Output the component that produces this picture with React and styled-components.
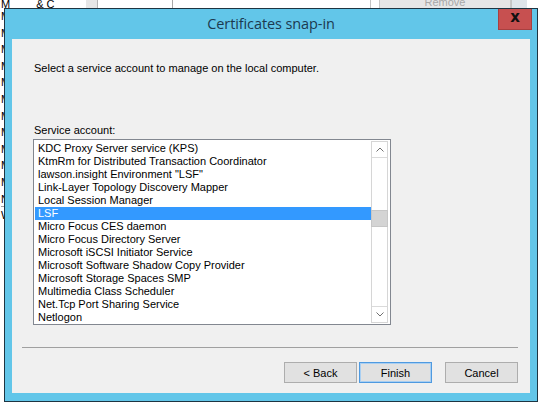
import React from 'react';
import styled, { createGlobalStyle } from 'styled-components';

const accounts = [
  'KDC Proxy Server service (KPS)',
  'KtmRm for Distributed Transaction Coordinator',
  'lawson.insight Environment "LSF"',
  'Link-Layer Topology Discovery Mapper',
  'Local Session Manager',
  'LSF',
  'Micro Focus CES daemon',
  'Micro Focus Directory Server',
  'Microsoft iSCSI Initiator Service',
  'Microsoft Software Shadow Copy Provider',
  'Microsoft Storage Spaces SMP',
  'Multimedia Class Scheduler',
  'Net.Tcp Port Sharing Service',
  'Netlogon',
];

const SELECTED = 'LSF';

// only the first letter of each row peeks out from under the dialog
const backRows = ['M', 'M', 'M', 'M', 'M', 'M', 'M', 'M', 'M', 'M', 'M', 'N', 'W'];

const GlobalStyle = createGlobalStyle`
  html, body {
    margin: 0;
    padding: 0;
    background: #fff;
  }
  * {
    box-sizing: border-box;
  }
`;

const Desktop = styled.div`
  position: relative;
  width: 545px;
  height: 413px;
  overflow: hidden;
  background: #fff;
  font-family: "Liberation Sans", Arial, sans-serif;
  font-size: 11px;
  color: #000;
`;

/* window lying behind the dialog */
const BackWindow = styled.div`
  display: flex;
  height: 400px;
`;

const BackList = styled.div`
  width: 86px;
  padding: 0 0 0 1px;
  display: flex;
  flex-direction: column;
`;

const BackHead = styled.div`
  height: 8px;
  line-height: 8px;
  display: flex;
  gap: 26px;
  overflow: hidden;
  align-items: flex-end;
`;

const BackRow = styled.div`
  height: 16.6px;
  line-height: 16.6px;
  white-space: nowrap;
  border-bottom: ${(p) => (p.$ruled ? '1px solid #a0a0a0' : 'none')};
`;

const BackScroll = styled.div`
  width: 12px;
  background: #e6e6e6;
  border-right: 1px solid #b4b4b4;
`;

const BackPanel = styled.div`
  width: 75px;
  border-right: 1px solid #a8a8a8;
`;

const BackGap = styled.div`
  flex: 1;
  border-right: 1px solid #c4c4c4;
`;

const BackButtons = styled.div`
  width: 140px;
  padding-left: 8px;
`;

const RemoveButton = styled.div`
  margin-top: -7px;
  height: 18px;
  background: #e6e6e6;
  border: 1px solid #c8c8c8;
  color: #a8a8a8;
  display: flex;
  align-items: center;
  justify-content: center;
`;

const BackScroll2 = styled.div`
  width: 16px;
  background: #dfe5ea;
  border-left: 1px solid #c4c4c4;
`;

const BackEdge = styled.div`
  width: 18px;
  background: #fff;
`;

/* the dialog */
const Dialog = styled.section`
  position: absolute;
  left: 4px;
  top: 8px;
  width: 534px;
  height: 394px;
  border: 1px solid #1e3542;
  background: #62c6e9;
  padding: 0 7px 8px 7px;
  display: flex;
  flex-direction: column;
`;

const TitleBar = styled.header`
  height: 30px;
  margin: 0 -7px;
  display: grid;
  grid-template-columns: 1fr auto 1fr;
  align-items: center;
`;

const Title = styled.h1`
  grid-column: 2;
  margin: 0 0 1px;
  font-family: "Open Sans", "Noto Sans", sans-serif;
  font-size: 14.5px;
  font-weight: 400;
  color: #1c3a50;
  letter-spacing: -0.1px;
`;

const CloseButton = styled.button`
  grid-column: 3;
  justify-self: end;
  align-self: start;
  margin-right: 5px;
  width: 34px;
  height: 21px;
  padding: 0 0 3px;
  border: 1px solid #a84040;
  border-top: none;
  background: #c75050;
  color: #111;
  font-family: "DejaVu Sans", sans-serif;
  font-size: 15px;
  font-weight: 700;
  line-height: 1;
  cursor: default;
`;

const Content = styled.div`
  flex: 1;
  background: #f0f0f0;
  padding: 23px 12px 0 22px;
  display: flex;
  flex-direction: column;
`;

const Text = styled.div`
  line-height: 13px;
  height: 13px;
  margin-top: ${(p) => p.$gap || 0}px;
  white-space: nowrap;
`;

const ListBox = styled.div`
  margin: 2px 0 0 -1px;
  width: 358px;
  height: 186px;
  border: 1px solid #828790;
  background: #fff;
  padding: 1px;
  display: flex;
`;

const Items = styled.div`
  flex: 1;
  overflow: hidden;
  padding-top: 1px;
`;

const Item = styled.div`
  height: 13px;
  line-height: 13px;
  padding-left: 3px;
  white-space: nowrap;
  overflow: hidden;
  background: ${(p) => (p.$selected ? '#3399ff' : 'transparent')};
  color: ${(p) => (p.$selected ? '#fff' : '#000')};
`;

const ScrollBar = styled.div`
  width: 17px;
  border: 1px solid #d6d6d6;
  display: flex;
  flex-direction: column;
  margin-right: 1px;
`;

const ArrowBox = styled.div`
  height: 16px;
  display: flex;
  align-items: center;
  justify-content: center;
  border-bottom: ${(p) => (p.$up ? '1px solid #dadada' : 'none')};
  border-top: ${(p) => (p.$up ? 'none' : '1px solid #dadada')};
`;

const Track = styled.div`
  flex: 1;
`;

const Thumb = styled.div`
  margin-top: 52px;
  height: 17px;
  background: #d4d4d4;
  border: 1px solid #c6c6c6;
  margin-left: -1px;
  margin-right: -1px;
`;

const Separator = styled.hr`
  margin: 22px 0 0 -12px;
  border: none;
  border-top: 1px solid #a0a0a0;
  height: 0;
`;

const ButtonRow = styled.div`
  margin-top: 14px;
  display: flex;
  justify-content: flex-end;
`;

const Button = styled.button`
  width: 73px;
  height: 21px;
  margin-left: ${(p) => p.$gap}px;
  padding: 0;
  background: #e1e1e1;
  border: 1px solid ${(p) => (p.$default ? '#4f9ae0' : '#adadad')};
  box-shadow: ${(p) => (p.$default ? 'inset 0 0 0 1px #a9cff2' : 'none')};
  font-family: "Liberation Sans", Arial, sans-serif;
  font-size: 11px;
  color: #000;
  cursor: default;
`;

const Chevron = ({ up }) => (
  <svg width="8" height="5" viewBox="0 0 8 5">
    <path
      d={up ? 'M0.5 4.5 L4 1 L7.5 4.5' : 'M0.5 0.5 L4 4 L7.5 0.5'}
      fill="none"
      stroke="#707070"
      strokeWidth="1"
    />
  </svg>
);

export default function App() {
  return (
    <>
      <GlobalStyle />
      <Desktop>
        <BackWindow>
          <BackList>
            <BackHead>
              <span>M</span>
              <span>&amp; C</span>
            </BackHead>
            {backRows.map((r, i) => (
              <BackRow key={i} $ruled={i === 11}>{r}</BackRow>
            ))}
          </BackList>
          <BackScroll />
          <BackPanel />
          <BackGap />
          <BackButtons>
            <RemoveButton>Remove</RemoveButton>
          </BackButtons>
          <BackScroll2 />
          <BackEdge />
        </BackWindow>

        <Dialog>
          <TitleBar>
            <Title>Certificates snap-in</Title>
            <CloseButton>x</CloseButton>
          </TitleBar>
          <Content>
            <Text>Select a service account to manage on the local computer.</Text>
            <Text $gap={49}>Service account:</Text>
            <ListBox>
              <Items>
                {accounts.map((a) => (
                  <Item key={a} $selected={a === SELECTED}>{a}</Item>
                ))}
              </Items>
              <ScrollBar>
                <ArrowBox $up><Chevron up /></ArrowBox>
                <Track><Thumb /></Track>
                <ArrowBox><Chevron /></ArrowBox>
              </ScrollBar>
            </ListBox>
            <Separator />
            <ButtonRow>
              <Button $gap={0}>&lt; Back</Button>
              <Button $gap={2} $default>Finish</Button>
              <Button $gap={13}>Cancel</Button>
            </ButtonRow>
          </Content>
        </Dialog>
      </Desktop>
    </>
  );
}
